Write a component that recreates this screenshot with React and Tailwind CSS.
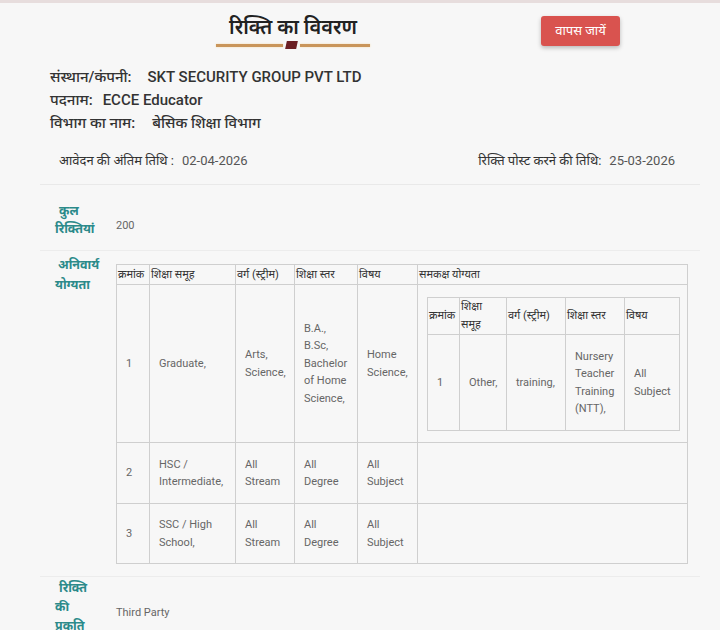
export default function App() {
  const th = "border border-[#cfcfcf] px-[1px] text-left font-normal text-[11px] leading-[18px] text-[#333] whitespace-nowrap align-middle";
  const td = "border border-[#cfcfcf] pl-[9px] pr-[8px] py-[12.5px] text-[11px] leading-[17.5px] text-[#666] align-middle";
  const td3 = "border border-[#cfcfcf] pl-[9px] pr-[8px] py-[12px] text-[11px] leading-[17.5px] text-[#666] align-middle";
  const label = "w-[76px] shrink-0 pl-[15px] text-[12.5px] font-bold text-[#2b8a8a]";

  return (
    <div className="min-h-[630px] bg-[#f7f7f7] border-t-[3px] border-[#e7dddd] font-['Roboto','Noto_Sans','Noto_Sans_Devanagari',sans-serif] text-[#333]">
      {/* heading */}
      <div className="flex items-start pt-[11px]">
        <div className="ml-[216px] w-[154px] flex flex-col items-center">
          <h1 className="text-[20px] leading-[26px] font-semibold text-[#222]">रिक्ति का विवरण</h1>
          <div className="mt-[1px] flex w-full items-center">
            <span className="h-[3px] w-[67px] bg-[#c9955b] shadow-[0_0_2px_#f3d9a8]" />
            <span className="mx-[3px] h-[8px] w-[11px] -skew-x-12 bg-[#6b1f24]" />
            <span className="h-[3px] flex-1 bg-[#c9955b] shadow-[0_0_2px_#f3d9a8]" />
          </div>
        </div>
        <button className="ml-[171px] mt-[2px] h-[30px] w-[79px] rounded-[3px] bg-[#d9534f] text-[13px] text-white shadow-[0_2px_4px_rgba(0,0,0,0.25)]">
          वापस जायें
        </button>
      </div>

      {/* company info */}
      <div className="mt-[17px] pl-[50px] text-[15px] leading-[23px] font-medium text-[#333]">
        <p>संस्थान/कंपनी:<span className="ml-[16px]">SKT SECURITY GROUP PVT LTD</span></p>
        <p>पदनाम:<span className="ml-[10px]">ECCE Educator</span></p>
        <p>विभाग का नाम:<span className="ml-[17px]">बेसिक शिक्षा विभाग</span></p>
      </div>

      {/* dates */}
      <div className="ml-[40px] mr-[20px] flex justify-between border-b border-[#e9e9e9] pt-[16px] pb-[13px] pl-[19px] pr-[25px] text-[13px] leading-[20px]">
        <p className="text-[#333]">आवेदन की अंतिम तिथि :<span className="ml-[8px] text-[#555]">02-04-2026</span></p>
        <p className="text-[#333]">रिक्ति पोस्ट करने की तिथि:<span className="ml-[8px] text-[#555]">25-03-2026</span></p>
      </div>

      {/* total vacancies */}
      <div className="ml-[40px] mr-[20px] flex items-start border-b border-[#ececec] pt-[17px] pb-[12px]">
        <div className={label + " leading-[18px]"}>
          <p className="pl-[4px]">कुल</p>
          <p>रिक्तियां</p>
        </div>
        <p className="mt-[16px] text-[11px] leading-[16px] text-[#666]">200</p>
      </div>

      {/* qualification */}
      <div className="ml-[40px] mr-[20px] flex items-start border-b border-[#ececec] pt-[4px] pb-[12px]">
        <div className={label + " leading-[20px]"}>
          <p className="pl-[3px]">अनिवार्य</p>
          <p>योग्यता</p>
        </div>
        <table className="mt-[9px] w-[572px] table-fixed border-collapse border border-[#c8c8c8]">
          <colgroup>
            <col className="w-[33px]" />
            <col className="w-[86px]" />
            <col className="w-[59px]" />
            <col className="w-[63px]" />
            <col className="w-[60px]" />
            <col />
          </colgroup>
          <thead>
            <tr className="h-[20px]">
              <th className={th}>क्रमांक</th>
              <th className={th}>शिक्षा समूह</th>
              <th className={th}>वर्ग (स्ट्रीम)</th>
              <th className={th}>शिक्षा स्तर</th>
              <th className={th}>विषय</th>
              <th className={th}>समकक्ष योग्यता</th>
            </tr>
          </thead>
          <tbody>
            <tr>
              <td className={td}>1</td>
              <td className={td}>Graduate,</td>
              <td className={td}>Arts, Science,</td>
              <td className={td}>B.A., B.Sc, Bachelor of Home Science,</td>
              <td className={td}>Home Science,</td>
              <td className="border border-[#cfcfcf] px-[9px] pt-[12px] pb-[11px] align-middle">
                <table className="w-[253px] table-fixed border-collapse border border-[#c8c8c8]">
                  <colgroup>
                    <col className="w-[32px]" />
                    <col className="w-[47px]" />
                    <col className="w-[59px]" />
                    <col className="w-[59px]" />
                    <col />
                  </colgroup>
                  <thead>
                    <tr className="h-[37px]">
                      <th className={th}>क्रमांक</th>
                      <th className={th + " leading-[17px]"}>शिक्षा<br />समूह</th>
                      <th className={th}>वर्ग (स्ट्रीम)</th>
                      <th className={th}>शिक्षा स्तर</th>
                      <th className={th}>विषय</th>
                    </tr>
                  </thead>
                  <tbody>
                    <tr>
                      <td className={td}>1</td>
                      <td className={td}>Other,</td>
                      <td className={td}>training,</td>
                      <td className={td}>Nursery Teacher Training (NTT),</td>
                      <td className={td}>All Subject</td>
                    </tr>
                  </tbody>
                </table>
              </td>
            </tr>
            <tr>
              <td className={td}>2</td>
              <td className={td}>HSC / Intermediate,</td>
              <td className={td}>All Stream</td>
              <td className={td}>All Degree</td>
              <td className={td}>All Subject</td>
              <td className={td}></td>
            </tr>
            <tr>
              <td className={td3}>3</td>
              <td className={td3}>SSC / High School,</td>
              <td className={td3}>All Stream</td>
              <td className={td3}>All Degree</td>
              <td className={td3}>All Subject</td>
              <td className={td3}></td>
            </tr>
          </tbody>
        </table>
      </div>

      {/* nature */}
      <div className="ml-[40px] mr-[20px] flex items-start pt-[1px]">
        <div className={label + " leading-[19px]"}>
          <p className="pl-[4px]">रिक्ति</p>
          <p>की</p>
          <p>प्रकृति</p>
        </div>
        <p className="mt-[27px] text-[11px] leading-[16px] text-[#666]">Third Party</p>
      </div>
    </div>
  );
}
